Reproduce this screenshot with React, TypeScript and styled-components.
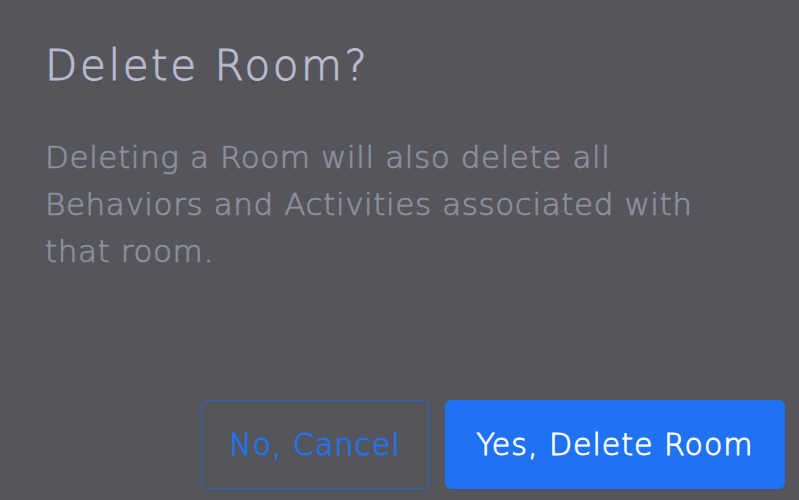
import React from "react";
import styled, { createGlobalStyle } from "styled-components";

const Global = createGlobalStyle`
  html, body { margin: 0; padding: 0; background: #55565c; }
  body { font-family: "DejaVu Sans", "Open Sans", sans-serif; }
`;

const Dialog = styled.div`
  box-sizing: border-box;
  width: 799px;
  height: 500px;
  background: #55565c;
  padding: 36px 14px 11px 45px;
  display: flex;
  flex-direction: column;
`;

const Title = styled.h1`
  margin: 0;
  font-weight: 200;
  font-size: 42px;
  letter-spacing: 2.6px;
  line-height: 60px;
  color: #babbcd;
  -webkit-text-stroke: 0.9px #babbcd;
`;

const Message = styled.p`
  margin: 38px 0 0 0;
  font-weight: 200;
  font-size: 31px;
  letter-spacing: 0.6px;
  line-height: 47px;
  color: #8e8f9c;
  -webkit-text-stroke: 0.7px #8e8f9c;
  max-width: 700px;
`;

const Actions = styled.div`
  margin-top: auto;
  display: flex;
  justify-content: flex-end;
  gap: 16px;
`;

const Button = styled.button<{ $primary?: boolean }>`
  box-sizing: border-box;
  height: 89px;
  padding: 0;
  border-radius: 6px;
  font-family: inherit;
  font-weight: 200;
  font-size: 30px;
  letter-spacing: 1px;
  cursor: pointer;
  border: 1px solid ${(p) => (p.$primary ? "#1f72f2" : "#2a63c4")};
  background: ${(p) => (p.$primary ? "#1f72f2" : "transparent")};
  color: ${(p) => (p.$primary ? "#ffffff" : "#2172ee")};
  -webkit-text-stroke: 0.9px ${(p) => (p.$primary ? "#ffffff" : "#2172ee")};
  width: ${(p) => (p.$primary ? "340px" : "228px")};
`;

export default function App() {
  return (
    <>
      <Global />
      <Dialog>
        <Title>Delete Room?</Title>
        <Message>
          Deleting a Room will also delete all Behaviors and Activities associated with that room.
        </Message>
        <Actions>
          <Button>No, Cancel</Button>
          <Button $primary>Yes, Delete Room</Button>
        </Actions>
      </Dialog>
    </>
  );
}
